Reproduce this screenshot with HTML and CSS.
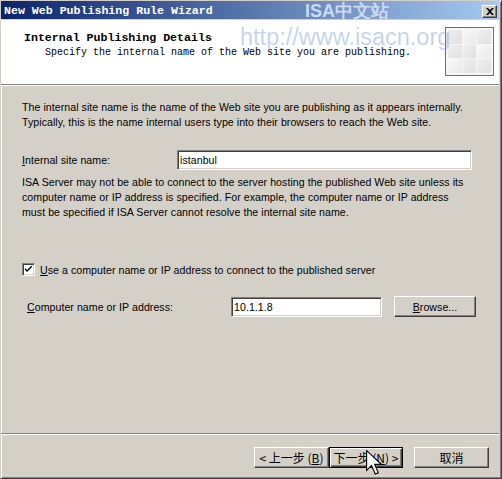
FILE: index.html
```html
<!DOCTYPE html>
<html lang="en">
<head>
  <meta charset="UTF-8">
  <title>New Web Publishing Rule Wizard</title>
  <link rel="stylesheet" href="styles.css">
</head>
<body>
<div class="window">
  <div class="titlebar">
    <span class="title-text">New Web Publishing Rule Wizard</span>
    <span class="close-btn">
      <svg width="8" height="7" viewBox="0 0 8 7"><path d="M0 0h2l2 2 2-2h2l-3 3.5 3 3.5h-2l-2-2-2 2h-2l3-3.5z" fill="#000"/></svg>
    </span>
  </div>

  <div class="header">
    <div class="header-text">
      <div class="header-title">Internal Publishing Details</div>
      <div class="header-sub">Specify the internal name of the Web site you are publishing.</div>
    </div>
    <div class="header-icon">
      <span></span><span></span><span></span>
      <span></span><span></span><span></span>
      <span></span><span></span><span></span>
    </div>
  </div>

  <div class="etched"></div>

  <div class="content">
    <p class="para">The internal site name is the name of the Web site you are publishing as it appears internally.<br>Typically, this is the name internal users type into their browsers to reach the Web site.</p>

    <div class="field-row first-row">
      <label class="field-label site-label"><u>I</u>nternal site name:</label>
      <div class="textbox site-box">istanbul</div>
    </div>

    <p class="para para-note">ISA Server may not be able to connect to the server hosting the published Web site unless its<br>computer name or IP address is specified. For example, the computer name or IP address<br>must be specified if ISA Server cannot resolve the internal site name.</p>

    <div class="check-row">
      <span class="checkbox">
        <svg width="7" height="7" viewBox="0 0 7 7"><path d="M0 2l2 2 5-5v2l-5 5-2-2z" fill="#000"/></svg>
      </span>
      <span><u>U</u>se a computer name or IP address to connect to the published server</span>
    </div>

    <div class="field-row computer-row">
      <label class="field-label computer-label"><u>C</u>omputer name or IP address:</label>
      <div class="textbox computer-box">10.1.1.8</div>
      <button class="button browse-btn"><u>B</u>rowse...</button>
    </div>
  </div>

  <div class="etched"></div>

  <div class="footer">
    <button class="button nav-btn">&lt; 上一步 (<u>B</u>)</button>
    <button class="button nav-btn default-btn">下一步 (<u>N</u>) &gt;</button>
    <button class="button nav-btn cancel-btn">取消</button>
  </div>

  <!-- watermark and mouse pointer lie over the dialog -->
  <div class="mark mark-site">ISA中文站</div>
  <div class="mark mark-url">http://www.isacn.org</div>
  <svg class="pointer" width="16" height="26" viewBox="0 0 13 21">
    <path d="M0.5 0.5v16l4-4 3 7 2.5-1-3-7h5.5z" fill="#fff" stroke="#000" stroke-width="0.9"/>
  </svg>
</div>
</body>
</html>
```

FILE: styles.css
```css
* {
  margin: 0;
  padding: 0;
  box-sizing: border-box;
}

body {
  background: #d4d0c8;
  font-family: 'Liberation Sans', Arial, sans-serif;
  font-size: 10.6px;
  letter-spacing: 0.05px;
  color: #000;
}

.window {
  position: relative;
  width: 502px;
  height: 479px;
  display: flex;
  flex-direction: column;
  background: #d4d0c8;
  border: 1px solid;
  border-color: #d4d0c8 #404040 #404040 #d4d0c8;
  box-shadow: inset 1px 1px #fff, inset -1px -1px #808080;
  padding: 0 2px 1px 0;
  overflow: hidden;
}

.titlebar {
  height: 18px;
  flex-shrink: 0;
  display: flex;
  align-items: center;
  justify-content: space-between;
  padding: 0 2px 0 3px;
  margin-bottom: 1px;
  background: linear-gradient(to right, #0a246a, #a6caf0);
}

.title-text {
  color: #fff;
  font-family: 'Liberation Mono', monospace;
  font-weight: bold;
  font-size: 11.6px;
  letter-spacing: 0;
}

.close-btn {
  width: 15px;
  height: 13px;
  display: flex;
  align-items: center;
  justify-content: center;
  background: #d4d0c8;
  border: 1px solid;
  border-color: #fff #404040 #404040 #fff;
  box-shadow: inset -1px -1px #808080;
  margin-top: 2px;
}

.header {
  height: 64px;
  flex-shrink: 0;
  display: flex;
  justify-content: space-between;
  background: #fff;
  padding: 11px 5px 0 23px;
}

.header-title {
  font-family: 'Liberation Mono', monospace;
  font-weight: bold;
  font-size: 11.6px;
  line-height: 14px;
  letter-spacing: 0;
}

.header-sub {
  font-family: 'Liberation Mono', monospace;
  font-size: 10px;
  line-height: 12px;
  letter-spacing: 0;
  margin: 2px 0 0 21px;
}

.header-icon {
  width: 49px;
  height: 49px;
  margin-top: -4px;
  border: 1px solid #6e6e6e;
  display: grid;
  grid-template-columns: repeat(3, 1fr);
  gap: 1px;
  background: #f6f6f6;
  padding: 2px;
}

.header-icon span {
  background: linear-gradient(135deg, #efefef, #e0e0e0);
}

.header-icon span:nth-child(2),
.header-icon span:nth-child(6),
.header-icon span:nth-child(7) {
  background: linear-gradient(135deg, #fafafa, #e8e8e8);
}

.etched {
  height: 2px;
  flex-shrink: 0;
  border-top: 1px solid #808080;
  border-bottom: 1px solid #fff;
}

.content {
  flex: 1;
  padding: 14px 27px 0 21px;
}

.para {
  line-height: 15px;
  white-space: nowrap;
}

.field-row {
  display: flex;
  align-items: center;
}

.field-row > * {
  flex-shrink: 0;
}

.first-row {
  margin-top: 20px;
  height: 20px;
}

.site-label {
  width: 155px;
}

.textbox {
  height: 20px;
  background: #fff;
  border: 1px solid;
  border-color: #808080 #fff #fff #808080;
  box-shadow: inset 1px 1px #404040, inset -1px -1px #d4d0c8;
  padding: 3px 3px 0 2px;
  line-height: 13px;
}

.site-box {
  flex: 1;
}

.para-note {
  margin-top: 5px;
}

.check-row {
  display: flex;
  align-items: center;
  gap: 5px;
  margin-top: 42px;
  height: 15px;
}

.checkbox {
  width: 13px;
  height: 13px;
  display: flex;
  align-items: center;
  justify-content: center;
  background: #fff;
  border: 1px solid;
  border-color: #808080 #fff #fff #808080;
  box-shadow: inset 1px 1px #404040, inset -1px -1px #d4d0c8;
}

.computer-row {
  margin-top: 19px;
  padding-left: 5px;
  height: 21px;
}

.computer-label {
  width: 204px;
}

.computer-box {
  width: 151px;
}

.button {
  height: 21px;
  background: #d4d0c8;
  border: 1px solid;
  border-color: #fff #404040 #404040 #fff;
  box-shadow: inset -1px -1px #808080;
  font-family: 'Liberation Sans', Arial, sans-serif;
  font-size: 10.6px;
  letter-spacing: 0.05px;
  color: #000;
}

.browse-btn {
  width: 82px;
  margin-left: 12px;
}

.footer {
  height: 42px;
  flex-shrink: 0;
  display: flex;
  justify-content: flex-end;
  padding: 12px 10px 0 0;
}

.nav-btn {
  width: 75px;
  font-family: 'Noto Sans CJK SC', sans-serif;
  font-size: 12px;
  line-height: 14px;
  letter-spacing: 0;
}

.default-btn {
  width: 74px;
  border: 1px solid #000;
  box-shadow: inset 1px 1px #fff, inset -1px -1px #404040, inset -2px -2px #808080;
}

.cancel-btn {
  margin-left: 11px;
}

.mark {
  position: absolute;
  pointer-events: none;
  font-family: 'Liberation Sans', Arial, sans-serif;
  letter-spacing: 0;
  white-space: nowrap;
}

.mark-site {
  left: 304px;
  top: -2px;
  font-size: 18px;
  font-weight: bold;
  color: rgba(232, 240, 252, 0.75);
  text-shadow: 0 0 1px rgba(120, 150, 200, 0.6);
}

.mark-url {
  left: 239px;
  top: 23px;
  font-size: 23.5px;
  color: rgba(140, 170, 215, 0.5);
}

.pointer {
  position: absolute;
  left: 365px;
  top: 449px;
}
```
